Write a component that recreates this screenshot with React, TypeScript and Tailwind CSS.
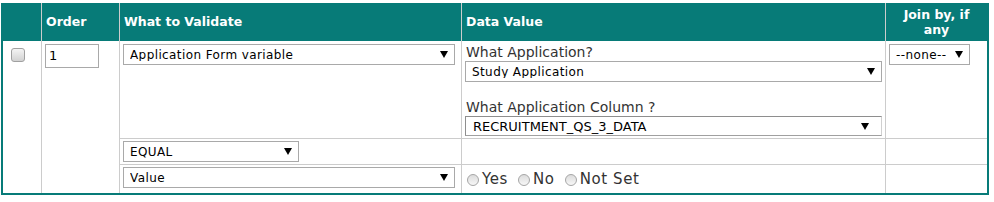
import React from 'react';

const Arrow = () => (
  <svg width="8" height="7" viewBox="0 0 8 7" className="shrink-0">
    <path d="M0 0H8L4 7Z" fill="#000" />
  </svg>
);

interface SelectProps {
  text: string;
  width: string;
}

const FakeSelect: React.FC<SelectProps> = ({ text, width }) => (
  <div
    className={`${width} h-[21px] flex items-center justify-between border border-[#a9a9a9] bg-white pl-[6px] pr-[6px] text-[12px] tracking-[0.4px] text-black leading-none`}
  >
    <span className="truncate">{text}</span>
    <Arrow />
  </div>
);

const Radio: React.FC<{ label: string }> = ({ label }) => (
  <span className="flex items-center mr-[10px]">
    <span className="w-[12px] h-[12px] rounded-full border border-[#a6a6a6] bg-gradient-to-b from-[#dcdcdc] to-[#f7f7f7]" />
    <span className="ml-[3px] text-[15px] tracking-[0.6px] text-[#333]">{label}</span>
  </span>
);

export default function App() {
  const line = 'border-[#cccccc]';
  const head = 'bg-[#077b78] text-white font-bold text-[12.5px]';

  return (
    <div className="pl-[1px] pt-[3px] bg-white font-['DejaVu_Sans','Verdana',sans-serif]">
      <div className="w-[988px] border-x-2 border-b-2 border-[#077b78]">
        <div className="grid grid-cols-[38px_78px_342px_424px_102px] grid-rows-[38px_97px_26px_29px]">
          {/* header */}
          <div className="bg-[#077b78]" />
          <div className={`${head} border-l ${line} flex items-center pl-1`}>Order</div>
          <div className={`${head} border-l ${line} flex items-center pl-1`}>What to Validate</div>
          <div className={`${head} border-l ${line} flex items-center pl-1`}>Data Value</div>
          <div className={`${head} border-l ${line} flex items-center justify-center text-center leading-[15px]`}>
            Join by, if<br />any
          </div>

          {/* checkbox + order span all body rows */}
          <div className="row-span-3 pl-[8px] pt-[7px]">
            <div className="w-[14px] h-[14px] rounded-[3px] border border-[#a0a0a0] bg-gradient-to-b from-[#f4f4f4] to-[#d2d2d2]" />
          </div>
          <div className={`row-span-3 border-l ${line} p-[3px]`}>
            <div className="w-[54px] h-[24px] border border-[#a9a9a9] flex items-center pl-[3px] text-[13px] text-black">1</div>
          </div>

          {/* row 1 */}
          <div className={`border-l ${line} p-[3px]`}>
            <FakeSelect text="Application Form variable" width="w-[332px]" />
          </div>
          <div className={`border-l ${line} pt-[3px] px-[3px]`}>
            <div className="ml-px text-[14px] leading-[17px] text-[#333]">What Application?</div>
            <FakeSelect text="Study Application" width="w-[417px]" />
            <div className="ml-px mt-[17px] text-[14px] leading-[17px] text-[#333]">What Application Column ?</div>
            <div className="w-[417px] h-[20px] flex items-center justify-between border border-[#8e8e8e] border-r-[#d0d0d0] border-b-[#a0a0a0] pl-[7px] pr-[12px] text-[13px] text-black leading-none">
              <span>RECRUITMENT_QS_3_DATA</span>
              <Arrow />
            </div>
          </div>
          <div className={`border-l ${line} p-[3px]`}>
            <FakeSelect text="--none--" width="w-[81px]" />
          </div>

          {/* row 2 */}
          <div className={`border-l border-t ${line} px-[3px] pt-[2px]`}>
            <FakeSelect text="EQUAL" width="w-[176px]" />
          </div>
          <div className={`border-l border-t ${line}`} />
          <div className={`border-l border-t ${line}`} />

          {/* row 3 */}
          <div className={`border-l border-t ${line} px-[3px] pt-[2px]`}>
            <FakeSelect text="Value" width="w-[332px]" />
          </div>
          <div className={`border-l border-t ${line} flex items-center pl-[5px] pt-[1px]`}>
            <Radio label="Yes" />
            <Radio label="No" />
            <Radio label="Not Set" />
          </div>
          <div className={`border-l border-t ${line}`} />
        </div>
      </div>
    </div>
  );
}
